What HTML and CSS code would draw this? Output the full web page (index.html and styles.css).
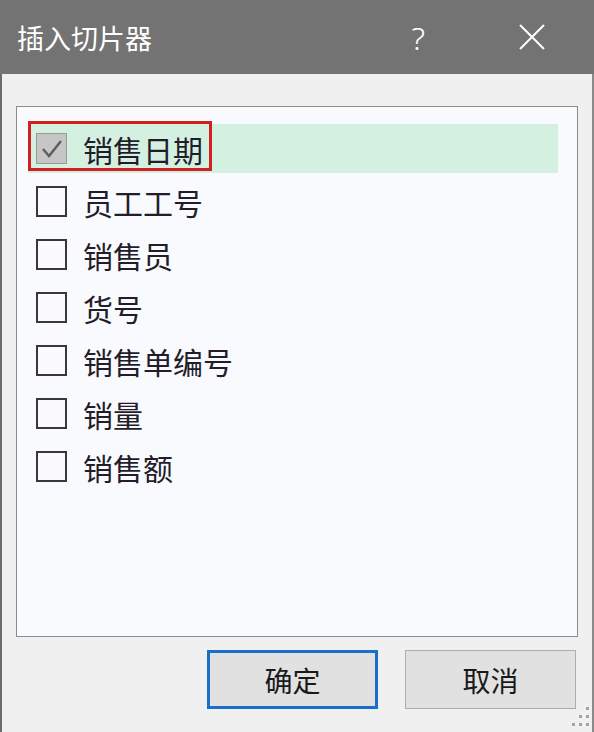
FILE: index.html
```html
<!DOCTYPE html>
<html lang="zh-CN">
<head>
<meta charset="UTF-8">
<meta name="viewport" content="width=device-width, initial-scale=1.0">
<title>插入切片器</title>
<link rel="stylesheet" href="styles.css">
</head>
<body>

<div class="dialog">
  <div class="titlebar">
    <span class="title">插入切片器</span>
    <span class="help">?</span>
    <svg class="close" width="26" height="26" viewBox="0 0 26 26">
      <path d="M1 1 L25 25 M25 1 L1 25" stroke="#fff" stroke-width="2" fill="none"/>
    </svg>
  </div>

  <div class="content">
    <div class="fieldlist">
      <div class="field selected">
        <span class="box checked">
          <svg width="24" height="24" viewBox="0 0 24 24">
            <path d="M3 12 L9 19 L21 4" stroke="#5e5e5e" stroke-width="2.4" fill="none"/>
          </svg>
        </span>
        <span class="label">销售日期</span>
        <div class="mark"></div>
      </div>
      <div class="field"><span class="box"></span><span class="label">员工工号</span></div>
      <div class="field"><span class="box"></span><span class="label">销售员</span></div>
      <div class="field"><span class="box"></span><span class="label">货号</span></div>
      <div class="field"><span class="box"></span><span class="label">销售单编号</span></div>
      <div class="field"><span class="box"></span><span class="label">销量</span></div>
      <div class="field"><span class="box"></span><span class="label">销售额</span></div>
    </div>

    <div class="buttons">
      <button class="btn default">确定</button>
      <button class="btn">取消</button>
    </div>
  </div>

  <svg class="grip" width="24" height="22" viewBox="0 0 24 22">
    <rect x="20" y="1" width="3" height="3" fill="#a3a3a3"/>
    <rect x="13" y="9" width="3" height="3" fill="#a3a3a3"/>
    <rect x="20" y="9" width="3" height="3" fill="#a3a3a3"/>
    <rect x="6" y="17" width="3" height="3" fill="#a3a3a3"/>
    <rect x="13" y="17" width="3" height="3" fill="#a3a3a3"/>
    <rect x="20" y="17" width="3" height="3" fill="#a3a3a3"/>
  </svg>
</div>

</body>
</html>
```

FILE: styles.css
```css
body {
  margin: 0;
  padding: 0;
  font-family: "Noto Sans CJK SC", "Noto Sans", sans-serif;
  background-color: #f0f0f0;
}
.dialog {
  position: relative;
  width: 594px;
  height: 732px;
  box-sizing: border-box;
  background-color: #f0f0f0;
  border-left: 2px solid #6c6c6c;
  border-right: 2px solid #8a8a8a;
  display: flex;
  flex-direction: column;
}
.titlebar {
  height: 74px;
  margin: 0 -2px;
  background-color: #737373;
  color: #fff;
  display: flex;
  align-items: center;
  padding: 0 49px 0 17px;
}
.title {
  font-size: 27px;
  flex: 1;
}
.help {
  font-family: "Noto Sans", sans-serif;
  font-size: 32px;
  font-weight: 300;
  margin-right: 94px;
}
.content {
  flex: 1;
  padding: 32px 14px 0 14px;
  display: flex;
  flex-direction: column;
}
.fieldlist {
  height: 531px;
  box-sizing: border-box;
  border: 1px solid #8c8c8c;
  background-color: #f9fafd;
  padding: 15px 19px 0 11px;
  display: flex;
  flex-direction: column;
}
.field {
  position: relative;
  height: 49px;
  flex-shrink: 0;
  margin: 2px 0;
  display: flex;
  align-items: center;
  padding-left: 8px;
}
.field.selected {
  background-color: #d4f0e0;
}
.box {
  width: 31px;
  height: 31px;
  box-sizing: border-box;
  border: 2px solid #3a3640;
  background-color: #fbfbfd;
  display: flex;
  align-items: center;
  justify-content: center;
}
.box.checked {
  border: 1px solid #9a9a9a;
  background-color: #c6c6c6;
}
.label {
  margin-left: 16px;
  font-size: 30px;
  color: #231d2a;
}
.mark {
  position: absolute;
  left: 0;
  top: -3px;
  width: 184px;
  height: 50px;
  box-sizing: border-box;
  border: 3px solid #d21f1f;
}
.buttons {
  display: flex;
  justify-content: flex-end;
  gap: 27px;
  margin-top: 13px;
  padding-right: 2px;
}
.btn {
  width: 171px;
  height: 59px;
  box-sizing: border-box;
  font-family: "Noto Sans CJK SC", sans-serif;
  font-size: 28px;
  color: #1a1a1a;
  background-color: #e1e1e1;
  border: 1px solid #adadad;
  padding: 0;
}
.btn.default {
  border: 3px solid #1a6fc9;
}
.grip {
  position: absolute;
  right: 2px;
  bottom: 4px;
}
```
